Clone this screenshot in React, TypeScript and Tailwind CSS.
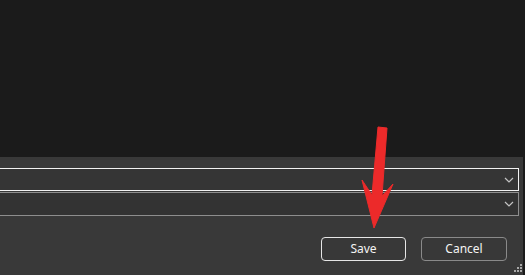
const Chevron = () => (
  <svg width="10" height="6" viewBox="0 0 10 6" className="shrink-0">
    <path d="M1 1l4 4 4-4" fill="none" stroke="#c4c4c4" strokeWidth="1.2" />
  </svg>
);

const Dropdown = ({ active }: { active?: boolean }) => (
  <div
    className={
      active
        ? 'h-[23px] -ml-2 flex items-center justify-end pr-[4px] border border-[#f2f2f2] bg-[#353535]'
        : 'h-[24px] -ml-2 flex items-center justify-end pr-[4px] border border-[#8e8e8e] bg-[#333333]'
    }
  >
    <Chevron />
  </div>
);

const GRIP = [
  [8, 0],
  [5, 3],
  [8, 3],
  [2, 6],
  [5, 6],
  [8, 6],
];

export default function App() {
  return (
    <div className="relative w-[525px] h-[275px] overflow-hidden bg-[#1b1b1b] flex flex-col font-['Noto_Sans','Open_Sans',sans-serif]">
      <div className="h-[157px] shrink-0" />

      <div className="flex-1 mr-[2px] bg-[#393939] flex flex-col">
        <div className="pt-[11px] pr-[4px] flex flex-col gap-[1px]">
          <Dropdown active />
          <Dropdown />
        </div>

        <div className="mt-[21px] pr-[16px] flex justify-end gap-[15px]">
          <button className="w-[85px] h-[24px] rounded-[4px] border border-[#e6e6e6] bg-[#383838] text-[#f4f4f4] text-[12px] leading-none">
            Save
          </button>
          <button className="w-[86px] h-[24px] rounded-[4px] border border-[#8a8a8a] bg-[#383838] text-[#f4f4f4] text-[12px] leading-none">
            Cancel
          </button>
        </div>
      </div>

      <div className="absolute right-[3px] bottom-[3px] w-[10px] h-[8px]">
        {GRIP.map(([x, y], i) => (
          <span
            key={i}
            className="absolute w-[2px] h-[2px] bg-[#a8a8a8]"
            style={{ left: x, top: y }}
          />
        ))}
      </div>

      <svg className="absolute left-0 top-0 pointer-events-none" width="525" height="275">
        <polygon
          points="378,127 387,128 382,196 393,184 374,228 362,180 372,195"
          fill="#ec2a2a"
          stroke="#ec2a2a"
          strokeWidth="1"
          strokeLinejoin="round"
        />
      </svg>
    </div>
  );
}
